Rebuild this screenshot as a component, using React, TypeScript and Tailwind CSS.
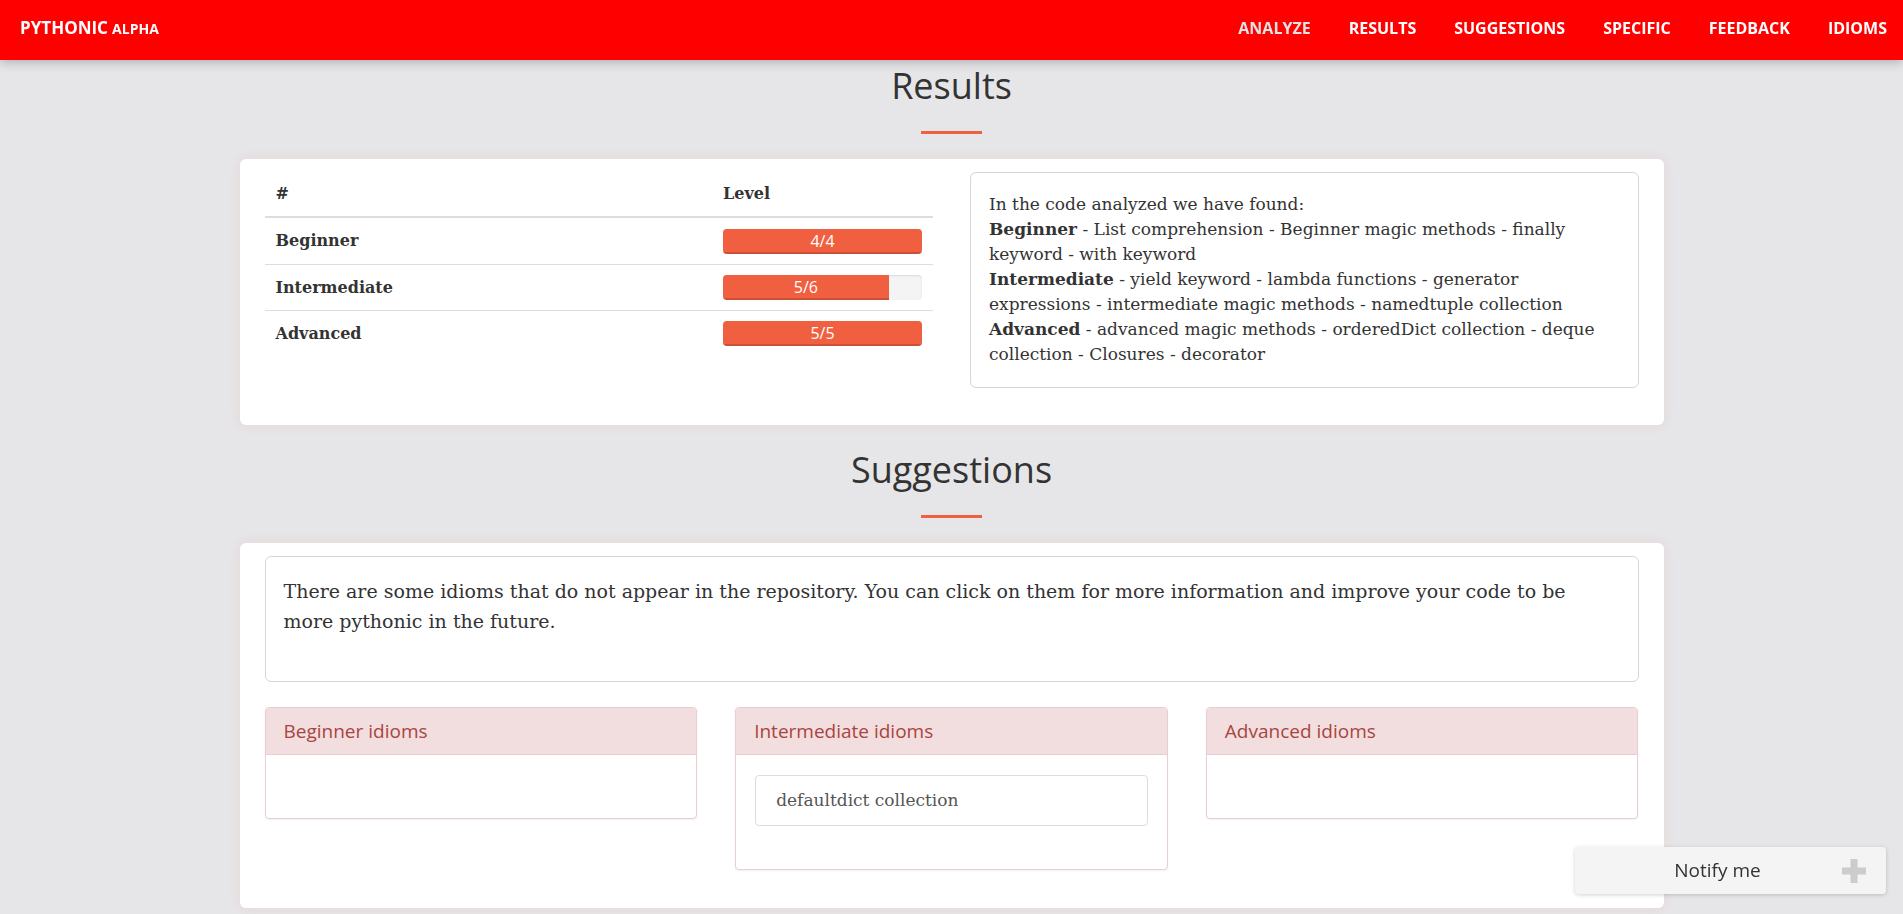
import React from "react";

const sans = "font-['Open_Sans',sans-serif]";
const serif = "font-['DejaVu_Serif',serif]";

const navLinks = ["Analyze", "Results", "Suggestions", "Specific", "Feedback", "Idioms"];

const levels = [
  { name: "Beginner", found: 4, total: 4 },
  { name: "Intermediate", found: 5, total: 6 },
  { name: "Advanced", found: 5, total: 5 },
];

const foundIdioms = [
  { level: "Beginner", items: "List comprehension - Beginner magic methods - finally keyword - with keyword" },
  { level: "Intermediate", items: "yield keyword - lambda functions - generator expressions - intermediate magic methods - namedtuple collection" },
  { level: "Advanced", items: "advanced magic methods - orderedDict collection - deque collection - Closures - decorator" },
];

const missing = [
  { title: "Beginner idioms", items: [] as string[] },
  { title: "Intermediate idioms", items: ["defaultdict collection"] },
  { title: "Advanced idioms", items: [] as string[] },
];

function SectionTitle({ children }: { children: React.ReactNode }) {
  return (
    <div className="flex flex-col items-center">
      <h2 className={`${sans} text-[36px] leading-[40px] text-[#333]`}>{children}</h2>
      <div className="mt-[25px] h-[3px] w-[61px] bg-[#f05f40]" />
    </div>
  );
}

function Progress({ found, total }: { found: number; total: number }) {
  return (
    <div className="h-[25px] w-full overflow-hidden rounded-[4px] bg-[#f4f4f4] shadow-[inset_0_1px_2px_rgba(0,0,0,0.1)]">
      <div
        className={`${sans} h-full bg-[#f05f40] text-center text-[16px] leading-[25px] text-white shadow-[inset_0_-2px_0_rgba(0,0,0,0.15)]`}
        style={{ width: `${(found / total) * 100}%` }}
      >
        {found}/{total}
      </div>
    </div>
  );
}

export default function App() {
  return (
    <div className="min-h-screen bg-[#e6e6e9] text-[#333]">
      {/* ── Navbar ── */}
      <nav className="fixed inset-x-0 top-0 z-10 flex h-[60px] items-center justify-between bg-[#ff0000] pb-[5px] pl-[20px] pr-[16px] shadow-[0_2px_10px_rgba(0,0,0,0.25)]">
        <a className={`${sans} font-bold text-white`}>
          <span className="text-[17px]">PYTHONIC</span>{" "}
          <span className="text-[14px]">ALPHA</span>
        </a>
        <ul className={`${sans} flex gap-[38px] text-[16px] font-bold uppercase`}>
          {navLinks.map((l, i) => (
            <li key={l} className={i === 0 ? "text-[#e2e2e2]" : "text-white"}>
              {l}
            </li>
          ))}
        </ul>
      </nav>

      <main className="pt-[66px] pb-[40px]">
        {/* ── Results ── */}
        <SectionTitle>Results</SectionTitle>
        <section className="mx-auto mt-[25px] grid w-[1424px] grid-cols-2 items-start gap-[37px] rounded-[6px] bg-white px-[25px] pb-[37px] pt-[13px] shadow-[0_0_14px_rgba(240,95,64,0.12)]">
          <div className={`${serif} text-[16px]`}>
            <div className="flex h-[46px] items-center border-b-2 border-[#ddd] font-bold">
              <div className="flex-1 pl-[11px]">#</div>
              <div className="w-[210px] pr-[11px]">Level</div>
            </div>
            {levels.map((l, i) => (
              <div
                key={l.name}
                className={`flex h-[46px] items-center ${i > 0 ? "border-t border-[#ddd]" : ""}`}
              >
                <div className="flex-1 pl-[11px] font-bold">{l.name}</div>
                <div className="w-[210px] pr-[11px]">
                  <Progress found={l.found} total={l.total} />
                </div>
              </div>
            ))}
          </div>

          <div className={`${serif} rounded-[6px] border border-[#d6d6d6] px-[18px] pb-[20px] pt-[19px] text-[17px] leading-[25px]`}>
            In the code analyzed we have found:
            {foundIdioms.map((f) => (
              <div key={f.level}>
                <b>{f.level}</b> - {f.items}
              </div>
            ))}
          </div>
        </section>

        {/* ── Suggestions ── */}
        <div className="mt-[25px]">
          <SectionTitle>Suggestions</SectionTitle>
        </div>
        <section className="mx-auto mt-[25px] w-[1424px] rounded-[6px] bg-white px-[25px] pb-[38px] pt-[13px] shadow-[0_0_14px_rgba(240,95,64,0.12)]">
          <div className={`${serif} rounded-[6px] border border-[#d6d6d6] px-[18px] pb-[45px] pt-[19px] text-[19px] leading-[30px]`}>
            There are some idioms that do not appear in the repository. You can click on them for more
            information and improve your code to be more pythonic in the future.
          </div>

          <div className="mt-[25px] grid grid-cols-3 items-start gap-[38px]">
            {missing.map((p) => (
              <div
                key={p.title}
                className="overflow-hidden rounded-[4px] border border-[#ebccd1] bg-white shadow-[0_1px_2px_rgba(0,0,0,0.06)]"
              >
                <div className={`${sans} flex h-[47px] items-center border-b border-[#ebccd1] bg-[#f2dede] px-[18px] text-[19px] text-[#a94442]`}>
                  {p.title}
                </div>
                <div className="px-[19px] pb-[43px] pt-[20px]">
                  {p.items.map((it) => (
                    <div
                      key={it}
                      className={`${serif} flex h-[51px] items-center rounded-[4px] border border-[#ddd] px-[20px] text-[17px] text-[#555]`}
                    >
                      {it}
                    </div>
                  ))}
                </div>
              </div>
            ))}
          </div>
        </section>
      </main>

      {/* ── Notify me ── */}
      <button className="fixed bottom-[20px] right-[17px] flex h-[47px] w-[311px] items-center justify-center rounded-[4px] bg-[#f4f4f4] pr-[26px] shadow-[0_1px_4px_rgba(0,0,0,0.18)]">
        <span className={`${sans} text-[19px] text-[#333]`}>Notify me</span>
        <svg viewBox="0 0 24 24" className="absolute right-[20px] top-[12px] h-[24px] w-[24px]">
          <rect x="8.5" y="0" width="7" height="24" fill="#cccccc" />
          <rect x="0" y="8.5" width="24" height="7" fill="#cccccc" />
        </svg>
      </button>
    </div>
  );
}
